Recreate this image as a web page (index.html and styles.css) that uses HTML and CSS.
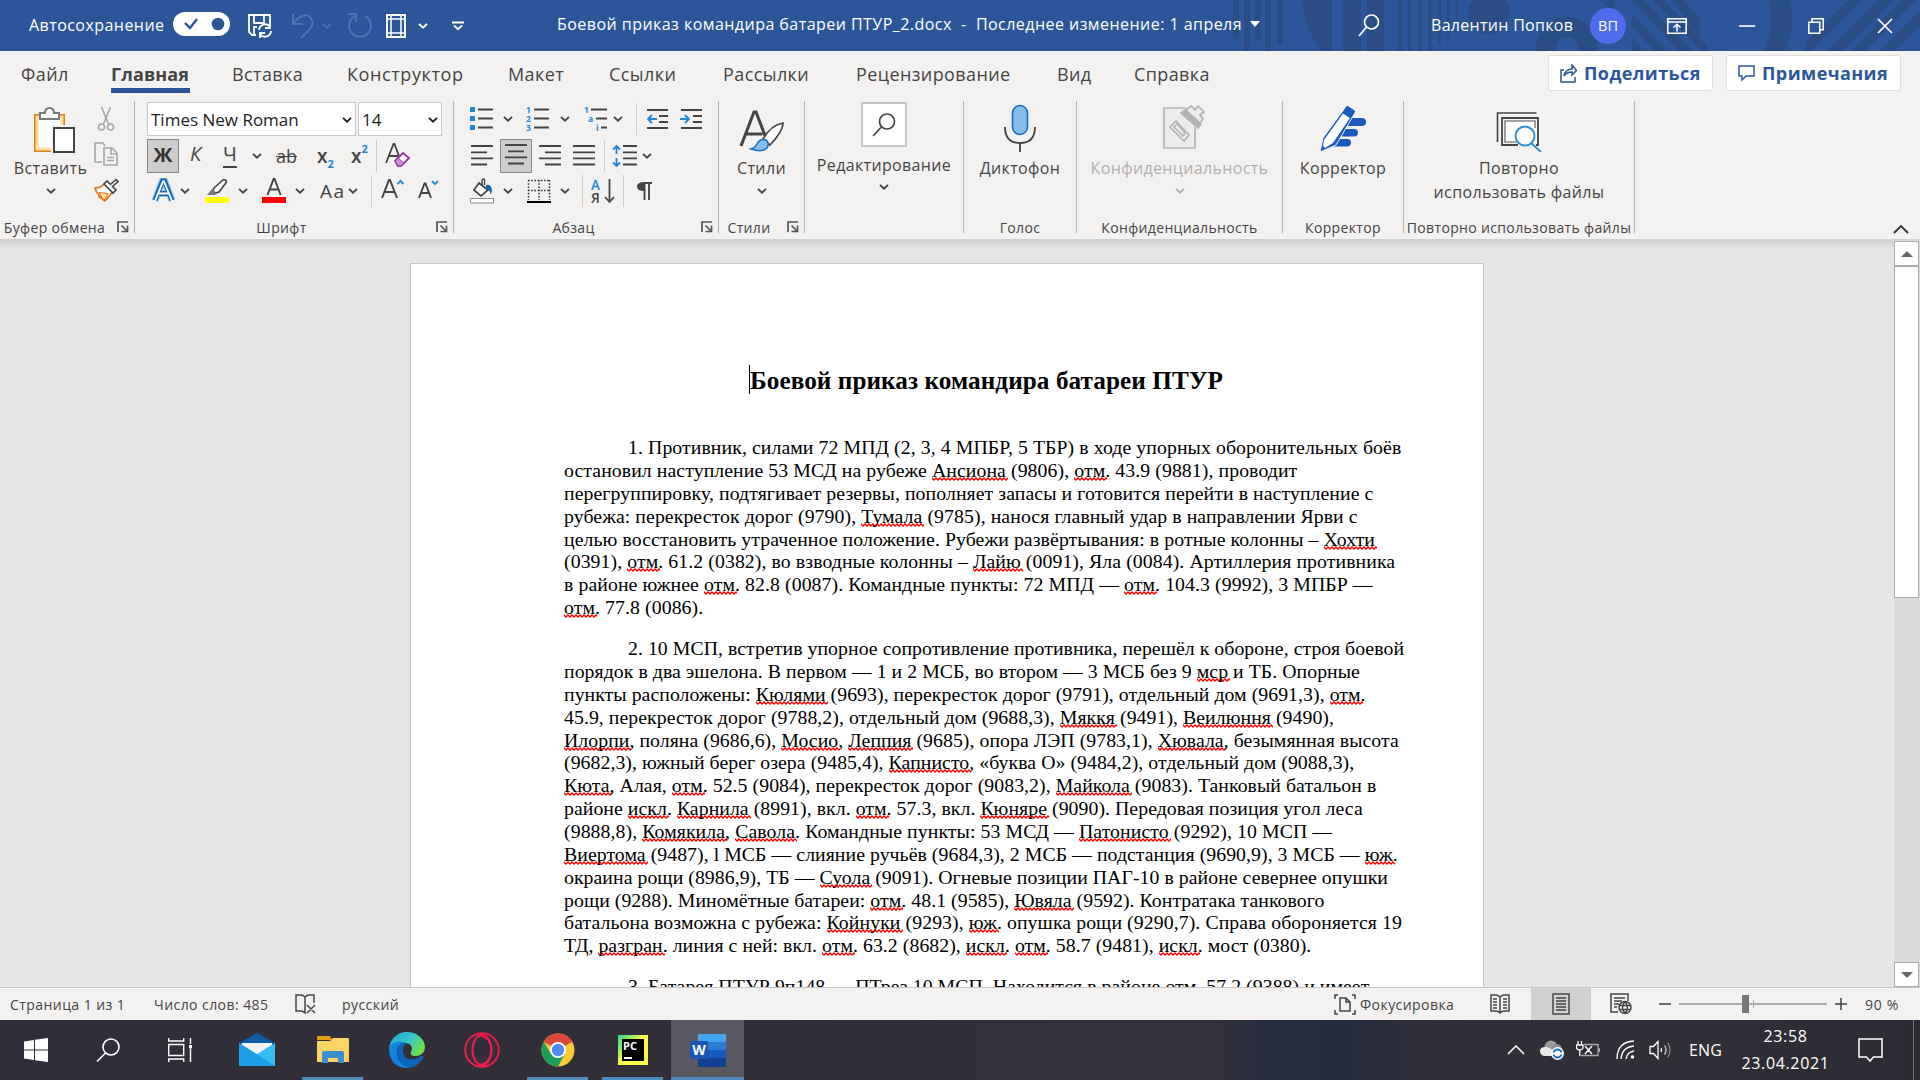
FILE: index.html
```html
<!DOCTYPE html>
<html lang="ru">
<head>
<meta charset="utf-8">
<title>Боевой приказ командира батареи ПТУР_2.docx</title>
<link rel="stylesheet" href="styles.css">
</head>
<body>
<svg class="defs" width="0" height="0">
  <symbol id="chev" viewBox="0 0 10 6"><path d="M1 .9l4 3.8 4-3.8" fill="none" stroke="currentColor" stroke-width="1.9"/></symbol>
  <symbol id="launch" viewBox="0 0 12 12"><path d="M1 11V1h10M4.500 4.500l5 5M10.500 4.500V10.500H4.500" fill="none" stroke="#555" stroke-width="1.700"/></symbol>
</svg>
<div class="app">
<header class="titlebar">
  <svg class="art" width="690" height="51" viewBox="1230 0 690 51" fill="#2a4d84">
    <path d="M1233 0h6v39h-6zM1244 0h6v50h-6zM1255 0h6v39h-6zM1265 0h6v51h-6zM1277 0h6v45h-6zM1302 0h30v51h-10Q1305 30 1302 0zM1343 0h18v51h-18zM1367 0h17v51h-17z"/>
    <path d="M1398 0h4v51h-4zM1408 0h3v51h-3zM1418 0h4v51h-4zM1428 0h4v51h-4zM1438 0h3v45h-3zM1447 0h3v38h-3zM1456 0h2v20h-2z"/>
    <circle cx="1489" cy="13" r="21"/>
    <circle cx="1567" cy="48" r="21" fill="none" stroke="#2a4d84" stroke-width="20"/>
    <path d="M1632 0h12l49 51h-14zM1632 14v13l23 24h12zM1632 38v13h11zM1652 0h12l43 45v6h-5zM1672 0h12l17 20q-4 14 0 20zM1600 0h15v14z"/>
    <path d="M1769 0h21q6 25-5 51h-20q10-27 4-51zM1806 42l42-42h14l-51 51h-5zM1828 51l51-51h14l-51 51zM1851 51l51-51h14l-51 51zM1880 51l40-40v14l-26 26z"/>
  </svg>
  <div class="quick">
    <span class="autosave">Автосохранение</span>
    <span class="toggle"><svg width="57" height="24" viewBox="0 0 57 24"><path d="M12 11l5 5 7-9" fill="none" stroke="#2b579a" stroke-width="2.400"/><circle cx="45" cy="12" r="6.300" fill="#2b579a"/></svg></span>
    <svg class="save" width="26" height="26" viewBox="0 0 26 26" fill="none" stroke="#fff" stroke-width="1.800"><path d="M9 22H5l-3-3V2h21v8M7 2v8h10V2M7 22v-8h3"/><path d="M12 17a6 6 0 0 1 11-3M23 10v5h-5M24 18a6 6 0 0 1-11 3M13 25v-5h5"/></svg>
    <svg width="24" height="26" viewBox="0 0 24 26" fill="none" stroke="#4a74b4" stroke-width="2"><path d="M2 1v10h10M2 11C8 3 15 0 19 4s3 9-1 13l-8 8"/></svg>
    <svg class="dim" width="10" height="6"><use href="#chev"/></svg>
    <svg width="26" height="26" viewBox="0 0 26 26" fill="none" stroke="#4a74b4" stroke-width="2"><path d="M1 1h8v8M8 3a11 11 0 1 0 10 0"/></svg>
    <svg width="20" height="24" viewBox="0 0 20 24" fill="none" stroke="#fff"><path d="M1 1h18v22H1z" stroke-width="2"/><path d="M5 0v24M15 0v24M0 5h20M0 19h20" stroke-width="1.500"/></svg>
    <svg class="wht" width="10" height="6"><use href="#chev"/></svg>
    <svg width="12" height="10" viewBox="0 0 12 10" fill="none" stroke="#fff" stroke-width="1.900"><path d="M0 1.500h12M2 4.500l4 3.800 4-3.800"/></svg>
  </div>
  <div class="doctitle"><span>Боевой приказ командира батареи ПТУР_2.docx&nbsp; -&nbsp; Последнее изменение: 1 апреля</span><svg width="10" height="6"><path d="M0 0h10L5 6z" fill="#fff"/></svg></div>
  <div class="account">
    <svg width="22" height="24" viewBox="0 0 22 24" fill="none" stroke="#fff" stroke-width="1.700"><circle cx="13.500" cy="8" r="7"/><path d="M8.500 13L1 22"/></svg>
    <span class="user">Валентин Попков</span><span class="avatar">ВП</span>
    <svg width="20" height="16" viewBox="0 0 20 16" fill="none" stroke="#fff" stroke-width="1.500"><path d="M.8.8h18.400v14.400H.8zM.8 4h18.400M10 13.500V6.500M6.500 9.500L10 6.200l3.500 3.300"/></svg>
    <svg width="16" height="16"><path d="M0 8h16" stroke="#fff" stroke-width="1.600"/></svg>
    <svg width="16" height="16" viewBox="0 0 16 16" fill="none" stroke="#fff" stroke-width="1.500"><path d="M.8 4.200h11v11H.8zM4 4V.8h11.200v11H12"/></svg>
    <svg width="16" height="16" viewBox="0 0 16 16"><path d="M1 1l14 14M15 1L1 15" stroke="#fff" stroke-width="1.700"/></svg>
  </div>
</header>

<nav class="tabs">
  <div class="tablist"><span>Файл</span><span class="active">Главная</span><span>Вставка</span><span class="wide">Конструктор</span><span>Макет</span><span>Ссылки</span><span>Рассылки</span><span>Рецензирование</span><span>Вид</span><span>Справка</span></div>
  <div class="actions">
    <button class="act share"><svg width="17" height="19" viewBox="0 0 17 19" fill="none" stroke="#2b579a" stroke-width="1.500"><path d="M4 6H1v12h14v-5M4 12c1-5 4-7 8-7V1l4.500 5.500L12 11V8C9 8 6 9 4 12z"/></svg>Поделиться</button>
    <button class="act"><svg width="17" height="19" viewBox="0 0 17 19" fill="none" stroke="#2b579a" stroke-width="1.500"><path d="M1 2h15v10H8l-4 4v-4H1z"/></svg>Примечания</button>
  </div>
</nav>

<section class="ribbon">
  <div class="group g-clip">
    <div class="clip">
      <div class="big paste">
        <svg width="42" height="48" viewBox="0 0 42 48"><path d="M2 10h29v36H2z" fill="#fff" stroke="#e07d17" stroke-width="2"/><path d="M4 12h25v32H4z" fill="none" stroke="#fbdf9b" stroke-width="3"/><path d="M7 14V8h5q0-5 4.500-5t4.500 5h5v6z" fill="#fff" stroke="#7a7a7a" stroke-width="2"/><path d="M18 20h24v28H18z" fill="#f3f2f1"/><path d="M21 23h20v24H21z" fill="#fff" stroke="#444" stroke-width="2"/></svg>
        <span>Вставить</span><svg width="10" height="6"><use href="#chev"/></svg>
      </div>
      <div class="clipcol">
        <svg width="24" height="26" viewBox="0 0 24 26" fill="none" stroke="#a6a6a6" stroke-width="1.600"><path d="M7.500 1L14.500 18M16.500 1L9.500 18"/><circle cx="7.500" cy="21" r="3"/><circle cx="16.500" cy="21" r="3"/></svg>
        <svg width="24" height="24" viewBox="0 0 24 24" fill="none" stroke="#a6a6a6" stroke-width="1.600"><path d="M8 20H1V1h8l2 3M10 6h8l5 5v12H10zM17 6v6h6M13 15.500h7M13 18.500h7"/></svg>
        <svg width="25" height="24" viewBox="0 0 25 24"><path d="M1 10q6 0 10-5l8 8q-4 6-8 10-3-1-4-4l-1.500.5q-.5-3-2-4.500l-1-1z" fill="#fff" stroke="#d9741a" stroke-width="1.700"/><path d="M5 14.500l9 1-3 6.500q-3-1-4-4z" fill="#fbdf9b" stroke="#d9741a"/><path d="M10 6l3-3 3.500 3.500L22 1.500l2 2-5.500 5L22 12l-3 3z" fill="#fff" stroke="#444" stroke-width="1.600"/></svg>
      </div>
    </div>
    <div class="glabel"><span>Буфер обмена</span><svg width="12" height="12"><use href="#launch"/></svg></div>
  </div>

  <div class="group g-font">
    <div class="rows">
      <div class="row combos"><div class="combo font">Times New Roman<svg width="10" height="6"><use href="#chev"/></svg></div><div class="combo size">14<svg width="10" height="6"><use href="#chev"/></svg></div></div>
      <div class="row f2">
        <b class="pressed">Ж</b><i class="ch">К</i><u class="ch">Ч</u><svg width="10" height="6"><use href="#chev"/></svg><s class="ch ab">ab</s>
        <span class="ch xs">x<sub>2</sub></span><span class="ch xs">x<sup>2</sup></span><span class="sep"></span>
        <svg width="26" height="26" viewBox="0 0 26 26" fill="none"><path d="M1 20L8.500 1h1L14 13M4 13h9" stroke="#444" stroke-width="1.800"/><path d="M10 18l8-8 6 5-8 8h-3z" fill="#fff" stroke="#9b30a5" stroke-width="1.800"/><path d="M10 18l3-3 6 5-3 3h-3z" fill="#c98fd0" stroke="#9b30a5"/></svg>
      </div>
      <div class="row f3">
        <svg width="25" height="26" viewBox="0 0 25 26" fill="none"><path d="M4 22.500L11.500 3h2L21 22.500M7.500 15.500h10" stroke="#83c0f0" stroke-width="7"/><path d="M4 22.500L11.500 3h2L21 22.500M7.500 15.500h10" stroke="#1664b4" stroke-width="4.800"/><path d="M4 23L12 3.500h1L21 23M7.500 15.500h10" stroke="#fff" stroke-width="1.900"/></svg>
        <svg width="10" height="6"><use href="#chev"/></svg>
        <svg width="24" height="26" viewBox="0 0 24 26"><path d="M9 10L18 2q3-1 3.500 2L14 14l-4 1-2-2z" fill="#fff" stroke="#444" stroke-width="1.600"/><path d="M2 17l5-6 5 5-2 1z" fill="#777"/><path d="M0 19h24v6H0z" fill="#ff0"/></svg>
        <svg width="10" height="6"><use href="#chev"/></svg>
        <svg width="24" height="26" viewBox="0 0 24 26"><path d="M5.500 17L11.600 1h1l6 16M7.500 11.500h9" fill="none" stroke="#444" stroke-width="1.900"/><path d="M0 19h24v6H0z" fill="red"/></svg>
        <svg width="10" height="6"><use href="#chev"/></svg>
        <span class="ch aa">Aa</span><svg width="10" height="6"><use href="#chev"/></svg><span class="sep"></span>
        <svg width="24" height="26" viewBox="0 0 24 26" fill="none"><path d="M1 20L8 2h1l7 18M3.500 14h10" stroke="#444" stroke-width="2"/><path d="M16.500 6l3-3 3 3" stroke="#2a91d6" stroke-width="2"/></svg>
        <svg width="22" height="26" viewBox="0 0 22 26" fill="none"><path d="M1 20L6.500 5.500h1L13 20M3 15h8" stroke="#444" stroke-width="1.900"/><path d="M14 3l3 3 3-3" stroke="#2a91d6" stroke-width="2"/></svg>
      </div>
    </div>
    <div class="glabel"><span>Шрифт</span><svg width="12" height="12"><use href="#launch"/></svg></div>
  </div>

  <div class="group g-para">
    <div class="rows">
      <div class="row p1">
        <svg width="24" height="24" viewBox="0 0 24 24"><path d="M0 0h5v5H0zM0 9h5v5H0zM0 18h5v5H0z" fill="#1e88d2"/><path d="M8 2.500h15M8 11.500h15M8 20.500h15" stroke="#444" stroke-width="1.800"/></svg>
        <svg width="10" height="6"><use href="#chev"/></svg>
        <svg class="list" width="24" height="26" viewBox="0 0 24 26"><path d="M8 3.500h15M8 12.500h15M8 21.500h15" stroke="#444" stroke-width="1.800"/><g class="num"><text x="0" y="7">1</text><text x="0" y="16">2</text><text x="0" y="25">3</text></g></svg>
        <svg width="10" height="6"><use href="#chev"/></svg>
        <svg class="list" width="24" height="26" viewBox="0 0 24 26"><path d="M7 3.500h16M12 12.500h11M17 21.500h6" stroke="#444" stroke-width="1.800"/><g class="num"><text x="0" y="7">1</text><text x="4" y="16">a</text><text x="12" y="25">i</text></g></svg>
        <svg width="10" height="6"><use href="#chev"/></svg><span class="sep"></span>
        <svg width="23" height="22" viewBox="0 0 23 22" fill="none" stroke="#444" stroke-width="1.800"><path d="M1 2h21M13 8h9M13 14h9M1 20h21"/><path d="M11 11H2M6 7l-4 4 4 4" stroke="#1e88d2"/></svg>
        <svg width="23" height="22" viewBox="0 0 23 22" fill="none" stroke="#444" stroke-width="1.800"><path d="M1 2h21M13 8h9M13 14h9M1 20h21"/><path d="M0 11h9M5 7l4 4-4 4" stroke="#1e88d2"/></svg>
      </div>
      <div class="row p2">
        <svg width="22" height="22" viewBox="0 0 22 22" stroke="#444" stroke-width="1.800"><path d="M0 1h22M0 7.300h16M0 13.300h22M0 19.500h16"/></svg>
        <span class="pressed"><svg width="22" height="22" viewBox="0 0 22 22" stroke="#444" stroke-width="1.800"><path d="M0 1h22M3 7.300h16M0 13.300h22M3 19.500h16"/></svg></span>
        <svg width="22" height="22" viewBox="0 0 22 22" stroke="#444" stroke-width="1.800"><path d="M0 1h22M6 7.300h16M0 13.300h22M6 19.500h16"/></svg>
        <svg width="22" height="22" viewBox="0 0 22 22" stroke="#444" stroke-width="1.800"><path d="M0 1h22M0 7.300h22M0 13.300h22M0 19.500h22"/></svg>
        <span class="sep"></span>
        <svg width="25" height="22" viewBox="0 0 25 22" fill="none" stroke="#444" stroke-width="1.800"><path d="M11 1h14M11 7.300h14M11 13.300h14M11 19.500h14"/><path d="M4.500 1v8M1 4.500L4.500 1 8 4.500M4.500 21v-8M1 17.500L4.500 21 8 17.500" stroke="#1e88d2"/></svg>
        <svg width="10" height="6"><use href="#chev"/></svg>
      </div>
      <div class="row p3">
        <svg width="24" height="26" viewBox="0 0 24 26"><path d="M9 5l9 7-7 6-7-6z" fill="#fff" stroke="#444" stroke-width="1.700"/><path d="M12 8V3q0-2 1.500-2t1 2v4" fill="none" stroke="#444" stroke-width="1.400"/><path d="M16 7q5-1 6 5l-1 5q-1-5-5-7z" fill="#1664b4"/><path d="M.5 20.500h23v4.500H.5z" fill="#fff" stroke="#8a8a8a"/></svg>
        <svg width="10" height="6"><use href="#chev"/></svg>
        <svg width="24" height="26" viewBox="0 0 24 26" fill="none" stroke="#333"><path d="M1 2.500h22M1 12.500h22M1.500 2v20M12 2v20M22.500 2v20" stroke-width="1.500" stroke-dasharray="1.600 1.600"/><path d="M0 24h24" stroke="#000" stroke-width="2"/></svg>
        <svg width="10" height="6"><use href="#chev"/></svg><span class="sep"></span>
        <svg class="list" width="25" height="26" viewBox="0 0 25 26"><path d="M18.500 1v23M14 19l4.500 5L23 19" fill="none" stroke="#444" stroke-width="1.800"/><g class="sort"><text x="0" y="11.500" fill="#1e88d2">А</text><text x="0" y="25" fill="#444">Я</text></g></svg>
        <span class="sep"></span>
        <svg width="15" height="20" viewBox="0 0 15 20"><path d="M7 1v9Q0 10 0 5.500T7 1z" fill="#444"/><path d="M6 2h9M7.500 2v17M12 2v17" stroke="#444" stroke-width="1.900"/></svg>
      </div>
    </div>
    <div class="glabel"><span>Абзац</span><svg width="12" height="12"><use href="#launch"/></svg></div>
  </div>

  <div class="group g-styles">
    <div class="big">
      <svg width="46" height="48" viewBox="0 0 46 48"><path d="M2 42L15 8h2l10 26M6.500 30h17" fill="none" stroke="#444" stroke-width="3"/><path d="M24 35Q32 21 44 19q0 8-13 22z" fill="#fff" stroke="#444" stroke-width="1.700"/><path d="M12 45q4-1 6-5 3-6 9-4 4 3 1 8-5 5-16 1z" fill="#83c0ee" stroke="#1a6fbf" stroke-width="1.600"/></svg>
      <span>Стили</span><svg width="10" height="6"><use href="#chev"/></svg>
    </div>
    <div class="glabel"><span>Стили</span><svg width="12" height="12"><use href="#launch"/></svg></div>
  </div>

  <div class="group g-edit">
    <div class="big edit">
      <span class="editbox"><svg width="24" height="24" viewBox="0 0 24 24" fill="none" stroke="#444" stroke-width="1.700"><circle cx="15" cy="8.500" r="7.500"/><path d="M9.500 14L1 23"/></svg></span>
      <span>Редактирование</span><svg width="10" height="6"><use href="#chev"/></svg>
    </div>
  </div>

  <div class="group g-voice">
    <div class="big">
      <svg width="34" height="48" viewBox="0 0 34 48" fill="none"><rect x="9.500" y="1.500" width="15" height="29" rx="7.500" fill="#83beec" stroke="#1a6fbf" stroke-width="1.600"/><path d="M2 23q0 16 15 16t15-16M17 39v9" stroke="#444" stroke-width="1.800"/></svg>
      <span>Диктофон</span>
    </div>
    <div class="glabel"><span>Голос</span></div>
  </div>

  <div class="group g-conf">
    <div class="big off">
      <svg class="shift" width="42" height="48" viewBox="0 0 42 48" fill="#ececec" stroke="#b4b4b4" stroke-width="1.700"><path d="M1 4h31v40H1z"/><path d="M7 23l6-6 13 14-5 6z"/><path d="M11 23l3-3 8 9-2 3z" fill="none"/><path d="M16 8l16-8 10 12-7 13z" stroke="#f3f2f1"/><path d="M18 9l5-4 15 15-3 4z" fill="#b4b4b4"/><path d="M23 6l5-4 4 4 3-4 6 6-4 3 3 4-3 4z"/></svg>
      <span>Конфиденциальность</span><svg width="10" height="6"><use href="#chev"/></svg>
    </div>
    <div class="glabel"><span>Конфиденциальность</span></div>
  </div>

  <div class="group g-corr">
    <div class="big">
      <svg width="46" height="48" viewBox="0 0 46 48" fill="#185abd"><rect x="24" y="14" width="22" height="8" rx="4"/><rect x="16" y="25" width="22" height="7.500" rx="3.700"/><rect x="8" y="35" width="23" height="7.500" rx="3.700"/><path d="M0 48l3-14L27 1l9 6-20 34z" stroke="#f3f2f1"/><path d="M4 36L23 9.500l7 4.500L13 39l-8 5-2-2z" fill="#fff"/></svg>
      <span>Корректор</span>
    </div>
    <div class="glabel"><span>Корректор</span></div>
  </div>

  <div class="group g-reuse">
    <div class="big">
      <svg width="46" height="48" viewBox="0 0 46 48" fill="none" stroke="#444" stroke-width="1.600"><path d="M1.500 38V9h39"/><path d="M6 14h36v27H6z" stroke-width="1.800"/><path d="M9 17h30v21H9z" fill="#fff" stroke="#888"/><path d="M22 24h18v18H22z" fill="#f8f8f8" stroke="none"/><circle cx="29" cy="32" r="9.500" fill="#fff" stroke="#2a91d6" stroke-width="1.900"/><path d="M35 39l10 9" stroke="#2a91d6" stroke-width="2"/></svg>
      <span>Повторно<br>использовать файлы</span>
    </div>
    <div class="glabel"><span>Повторно использовать файлы</span></div>
  </div>
  <svg class="collapse" width="16" height="10" viewBox="0 0 16 10"><path d="M1 9l7-7 7 7" fill="none" stroke="#333" stroke-width="1.900"/></svg>
</section>

<main class="work">
  <div class="canvas">
    <article class="page">
      <h1><span class="caret"></span>Боевой приказ командира батареи ПТУР</h1>
      <p class="first">1. Противник, силами 72 МПД (2, 3, 4 МПБР, 5 ТБР) в ходе упорных оборонительных боёв<br>
остановил наступление 53 МСД на рубеже <em>Ансиона</em> (9806), <em>отм</em>. 43.9 (9881), проводит<br>
перегруппировку, подтягивает резервы, пополняет запасы и готовится перейти в наступление с<br>
рубежа: перекресток дорог (9790), <em>Тумала</em> (9785), нанося главный удар в направлении Ярви с<br>
целью восстановить утраченное положение. Рубежи развёртывания: в ротные колонны – <em>Хохти</em><br>
(0391), <em>отм</em>. 61.2 (0382), во взводные колонны – <em>Лайю</em> (0091), Яла (0084). Артиллерия противника<br>
в районе южнее <em>отм</em>. 82.8 (0087). Командные пункты: 72 МПД — <em>отм</em>. 104.3 (9992), 3 МПБР —<br>
<em>отм</em>. 77.8 (0086).</p>
      <p>2. 10 МСП, встретив упорное сопротивление противника, перешёл к обороне, строя боевой<br>
порядок в два эшелона. В первом — 1 и 2 МСБ, во втором — 3 МСБ без 9 <em>мср</em> и ТБ. Опорные<br>
пункты расположены: <em>Кюлями</em> (9693), перекресток дорог (9791), отдельный дом (9691,3), <em>отм</em>.<br>
45.9, перекресток дорог (9788,2), отдельный дом (9688,3), <em>Мяккя</em> (9491), <em>Веилюння</em> (9490),<br>
<em>Илорпи</em>, поляна (9686,6), <em>Мосио</em>, <em>Леппия</em> (9685), опора ЛЭП (9783,1), <em>Хювала</em>, безымянная высота<br>
(9682,3), южный берег озера (9485,4), <em>Капнисто</em>, «буква О» (9484,2), отдельный дом (9088,3),<br>
<em>Кюта</em>, Алая, <em>отм</em>. 52.5 (9084), перекресток дорог (9083,2), <em>Майкола</em> (9083). Танковый батальон в<br>
районе <em>искл</em>. <em>Карнила</em> (8991), вкл. <em>отм</em>. 57.3, вкл. <em>Кюняре</em> (9090). Передовая позиция угол леса<br>
<span class="loose">(9888,8), <em>Комякила</em>, <em>Савола</em>. Командные пункты: 53 МСД — <em>Патонисто</em> (9292), 10 МСП —</span><br>
<em>Виертома</em> (9487), l МСБ — слияние ручьёв (9684,3), 2 МСБ — подстанция (9690,9), 3 МСБ — <em>юж</em>.<br>
окраина рощи (8986,9), ТБ — <em>Суола</em> (9091). Огневые позиции ПАГ-10 в районе севернее опушки<br>
рощи (9288). Миномётные батареи: <em>отм</em>. 48.1 (9585), <em>Ювяла</em> (9592). Контратака танкового<br>
<span class="loose">батальона возможна с рубежа: <em>Койнуки</em> (9293), <em>юж</em>. опушка рощи (9290,7). Справа обороняется 19</span><br>
ТД, <em>разгран</em>. линия с ней: вкл. <em>отм</em>. 63.2 (8682), <em>искл</em>. <em>отм</em>. 58.7 (9481), <em>искл</em>. мост (0380).</p>
      <p>3. Батарея ПТУР 9п148 — ПТрез 10 МСП. Находится в районе отм. 57.2 (9388) и имеет</p>
    </article>
  </div>
  <div class="scroll">
    <span class="sbtn"><svg width="12" height="6"><path d="M0 6h12L6 0z" fill="#666"/></svg></span>
    <span class="thumb"></span>
    <span class="sbtn end"><svg width="12" height="6"><path d="M0 0h12L6 6z" fill="#666"/></svg></span>
  </div>
</main>

<footer class="status">
  <div class="stat-left">
    <span>Страница 1 из 1</span><span>Число слов: 485</span>
    <svg width="22" height="20" viewBox="0 0 22 20" fill="none" stroke="#444" stroke-width="1.500"><path d="M10 3Q8 1 6 1H1v16h5q2 0 4 2V3q2-2 4-2h5v8M12 11l8 8M20 11l-8 8"/></svg>
    <span>русский</span>
  </div>
  <div class="stat-right">
    <svg width="22" height="21" viewBox="0 0 22 21" fill="none" stroke="#444" stroke-width="1.500"><path d="M4 1H1v4M18 1h3v4M4 20H1v-4M18 20h3v-4M6 4h6l4 4v9H6zM12 4v4h4"/></svg>
    <span class="focus">Фокусировка</span>
    <svg width="20" height="20" viewBox="0 0 20 20" fill="none" stroke="#444" stroke-width="1.500"><path d="M10 3Q8 1 6 1H1v16h5q2 0 4 2 2-2 4-2h5V1h-5q-2 0-4 2v16M3 5h4M3 8h4M3 11h4M3 14h4M13 5h4M13 8h4M13 11h4M13 14h4"/></svg>
    <span class="viewon"><svg width="18" height="22" viewBox="0 0 18 22" fill="none" stroke="#444" stroke-width="1.500"><path d="M1 1h16v20H1zM4 5h10M4 8h10M4 11h10M4 14h10M4 17h10"/></svg></span>
    <svg width="22" height="22" viewBox="0 0 22 22" fill="none" stroke="#444" stroke-width="1.500"><path d="M8 19H1V1h17v7M4 5h11M4 8h8M4 11h5M4 14h3"/><circle cx="15" cy="14.500" r="6" fill="#f3f2f1"/><path d="M9 12.500h12M9 16.500h12M15 8.500q-5 6 0 12M15 8.500q5 6 0 12"/></svg>
    <svg width="12" height="12"><path d="M0 6h12" stroke="#444" stroke-width="1.500"/></svg>
    <span class="slider"><span class="knob"></span><span class="tick"></span></span>
    <svg width="12" height="12"><path d="M0 6h12M6 0v12" stroke="#444" stroke-width="1.500"/></svg>
    <span class="zoom">90 %</span>
  </div>
</footer>

<div class="taskbar">
  <div class="apps">
    <span class="app-i"><svg width="24" height="24" viewBox="0 0 24 24" fill="#fff"><path d="M0 3.500L10 2v9.400H0zM11 1.800L24 0v11.400H11zM0 12.400h10V22L0 20.500zM11 12.400h13V24l-13-1.800z"/></svg></span>
    <span class="app-i"><svg width="24" height="24" viewBox="0 0 24 24" fill="none" stroke="#fff" stroke-width="1.600"><circle cx="15" cy="9" r="8"/><path d="M9.500 15L1 23.500"/></svg></span>
    <span class="app-i"><svg width="24" height="24" viewBox="0 0 24 24" fill="none" stroke="#fff" stroke-width="1.400"><path d="M.7 0v3h15V0M.7 6.500h15v11H.7zM.7 24v-3h15v3M22.500 0v6M22.500 11v13"/><path d="M21 7h3v3.500h-3z" fill="#fff" stroke="none"/></svg></span>
    <span class="app-i mail"><svg width="36" height="34" viewBox="0 0 36 34"><path d="M0 10L18 0l18 10v6H0z" fill="#0a5ea8"/><path d="M3 10h30v14H3z" fill="#f2f4f6"/><path d="M0 10l18 11L36 10v23H0z" fill="#33bdf2"/><path d="M0 10l36 23H0z" fill="#1b9fe6"/><path d="M3 10h30L18 21z" fill="#f2f4f6"/></svg></span>
    <span class="app-i run w2"><svg width="32" height="28" viewBox="0 0 32 28"><path d="M0 1q0-1 1-1h12l2 4H0z" fill="#e39e0b"/><path d="M0 5h13l3-3h15q1 0 1 1v23H0z" fill="#fdd465"/><path d="M5 27V17q0-2 2-2h18q2 0 2 2v10h-6v-5H11v5z" fill="#3a8fd0"/></svg></span>
    <span class="app-i edge"><svg width="36" height="36" viewBox="0 0 36 36"><defs><linearGradient id="eg" x1="0" y1="0" x2="1" y2=".5"><stop offset="0" stop-color="#249fe0"/><stop offset=".6" stop-color="#37c6c6"/><stop offset="1" stop-color="#6fe04e"/></linearGradient></defs><path d="M0 17c2-6 10-8 17-5-5 2-4 14 3 15 5 1 9-1 12-3 2-1 3 0 2 2-3 6-9 10-16 10C8 36 0 28 0 17z" fill="#0c63b8"/><path d="M0 17C1 6 9 0 18 0c11 0 18 8 18 15 0 6-5 9-9 9-5 0-6-2-5-4 3-5-1-9-6-9C8 10 1 12 0 17z" fill="url(#eg)"/><path d="M0 17c1-7 10-9 16-6-6 0-10 6-8 13s7 11 13 11C8 38 0 29 0 17z" fill="#1681d8"/></svg></span>
    <span class="app-i opera"><svg width="36" height="36" viewBox="0 0 36 36" fill="none" stroke="#ec1c4b"><circle cx="18" cy="18" r="16.800" stroke-width="2"/><ellipse cx="18" cy="18" rx="9.500" ry="15" stroke-width="2"/><path d="M14 3q13 2 13 15T14 33" stroke-width="1.300"/></svg></span>
    <span class="app-i run w2 spaced"><svg width="34" height="34" viewBox="0 0 34 34"><circle cx="17" cy="17" r="16.500" fill="#fcc934"/><path d="M17 17L2.700 8.700A16.500 16.500 0 0 1 31.300 8.700z" fill="#da4a3b"/><path d="M2.700 8.700A16.500 16.500 0 0 0 17 33.500L24 21 10 21z" fill="#1c9f58"/><path d="M17 9h14.400q-1-3-4-5L10 7z" fill="#da4a3b"/><circle cx="17" cy="17" r="8" fill="#fff"/><circle cx="17" cy="17" r="6.200" fill="#4c8bf5"/></svg></span>
    <span class="app-i run w2 pc"><svg width="30" height="30" viewBox="0 0 30 30"><defs><linearGradient id="pg" x1="0" y1="0" x2=".5" y2=".45"><stop offset="0" stop-color="#21d789"/><stop offset="1" stop-color="#fcf84a"/></linearGradient></defs><path d="M0 0h30v30H0z" fill="url(#pg)"/><path d="M4 4h22v22H4z" fill="#000"/><text x="5" y="15" class="pct">PC</text><path d="M6 22h8v2H6z" fill="#fff"/></svg></span>
    <span class="app-i run on"><svg width="36" height="33" viewBox="0 0 36 33"><path d="M8 1q0-1 1-1h26q1 0 1 1v8H8z" fill="#41a5ee"/><path d="M8 8h28v8H8z" fill="#2b7cd3"/><path d="M8 16h28v8H8z" fill="#185abd"/><path d="M8 24h28v8q0 1-1 1H9q-1 0-1-1z" fill="#103f91"/><rect y="7" width="18" height="18" rx="1.500" fill="#1a56b4"/><text x="2.300" y="21" class="wt">W</text></svg></span>
  </div>
  <div class="tray">
    <svg width="18" height="10" viewBox="0 0 18 10"><path d="M1 9l8-8 8 8" fill="none" stroke="#fff" stroke-width="1.500"/></svg>
    <svg width="25" height="20" viewBox="0 0 25 20"><circle cx="11" cy="7" r="6.500" fill="#9a9a9a"/><circle cx="17" cy="9" r="5" fill="#8a8a8a"/><path d="M4 16q-4-1-4-5t5-4q5 0 8 4v5z" fill="#e8e8e8"/><circle cx="17.500" cy="13.500" r="6.500" fill="#fff"/><path d="M13.500 12.500q1-3 4-3t4 3M21.500 14.500q-1 3-4 3t-4-3" fill="none" stroke="#1a74c8" stroke-width="1.800"/></svg>
    <svg width="24" height="18" viewBox="0 0 24 18" fill="none" stroke="#fff" stroke-width="1.300"><path d="M2 0v4M5.500 0v4M.5 4h6.500v3q-1 2-3.200 2T.5 7zM3.800 9v6M9 5l7 8M16 5l-7 8"/><path d="M8 3.500h14v11H5M23.500 7v4" stroke="#aaa"/></svg>
    <svg width="20" height="20" viewBox="0 0 20 20" fill="none" stroke="#fff" stroke-width="1.300"><path d="M1 19Q1 2 18 1M5 19Q6 7 18 6M10 19Q11 12 18 11"/><circle cx="16.500" cy="17" r="1.800" fill="#fff" stroke="none"/></svg>
    <svg width="23" height="20" viewBox="0 0 23 20" fill="none" stroke="#fff" stroke-width="1.300"><path d="M1 6.500h3.500L9 1.500v17l-4.500-5H1zM12 8q1 2 0 4"/><path d="M15.500 5.500q3 4.500 0 9" stroke="#ccc"/><path d="M18.500 2.500q5 7.500 0 15" stroke="#888"/></svg>
    <span class="lang">ENG</span>
    <div class="clock"><span>23:58</span><span>23.04.2021</span></div>
    <svg width="25" height="26" viewBox="0 0 25 26"><path d="M1 2h23v18h-8.500l-3.500 4-3.500-4H1z" fill="none" stroke="#fff" stroke-width="1.500"/></svg>
    <span class="peek"></span>
  </div>
</div>
</div>
</body>
</html>
```
FILE: styles.css
```css
*{box-sizing:border-box}
html,body{margin:0;padding:0}
body{width:1920px;height:1080px;overflow:hidden;font-family:"Open Sans","Noto Sans",sans-serif;font-size:16px;letter-spacing:.35px;color:#444}
svg{display:block;flex:none}
.defs{position:absolute}
.app{width:1920px;height:1080px;display:flex;flex-direction:column}

/* title bar */
.titlebar{position:relative;height:51px;background:#2b579a;color:#fff;display:flex;align-items:center;flex:none;white-space:nowrap}
.art{position:absolute;left:1230px;top:0}
.quick{display:grid;grid-template-columns:144px 75px 43px 31px 25px 39px 32px 34px 12px;padding-left:29px;align-items:center;height:51px;width:557px}
.autosave{letter-spacing:.45px;margin-top:-1px}
.toggle{width:57px;height:24px;border-radius:12px;background:#fff;margin-top:-3px}
.save{margin-left:-1px}
.dim{color:#4a74b4}
.wht{color:#fff}
.doctitle{display:flex;align-items:center;width:801px;gap:8px;letter-spacing:.46px;padding-bottom:3px;position:relative}
.account{position:relative;display:grid;grid-template-columns:73px 159px 77px 72px 69px 69px 16px;align-items:center}
.user{letter-spacing:.3px;margin-top:-1px}
.avatar{width:36px;height:36px;border-radius:50%;background:#4f6bed;font-size:14.500px;display:grid;place-items:center;letter-spacing:0}

/* ribbon tabs */
.tabs{height:50px;background:#f3f2f1;display:flex;justify-content:space-between;flex:none;font-size:18px;white-space:nowrap}
.tablist{display:grid;grid-template-columns:90px 121px 115px 161px 101px 114px 133px 201px 77px 100px;padding-left:21px;line-height:46px;letter-spacing:.4px}
.tablist .wide{letter-spacing:.6px}
.tablist .active{font-weight:700;letter-spacing:.1px;width:79px;height:42px;border-bottom:5px solid #2b579a}
.actions{display:flex;gap:13px;padding:4px 19px 0 0}
.act{height:36px;width:175px;background:#fff;border:1px solid #e1dfdd;border-radius:3px;font:700 18px "Open Sans",sans-serif;letter-spacing:.42px;color:#2b579a;display:flex;align-items:center;gap:7px;padding:0 0 0 11px}
.share{width:165px}

/* ribbon */
.ribbon{height:139px;background:#f3f2f1;border-bottom:1px solid #d2d0ce;display:flex;align-items:flex-start;flex:none;white-space:nowrap}
.group{height:132px;border-right:1px solid #b5b3b1;display:flex;flex-direction:column;justify-content:space-between;flex:none}
.g-clip{width:135px}.g-font{width:319px}.g-para{width:265px}.g-styles{width:86px}.g-edit{width:159px}.g-voice{width:113px}.g-conf{width:206px}.g-corr{width:121px}.g-reuse{width:231px}
.glabel{height:12px;display:flex;align-items:center;font-size:14px}
.glabel span{flex:1;text-align:center}
.glabel svg{margin:0 5px 0 8px}
.rows{display:grid;grid-template-rows:36px 38px 32px}
.row{display:grid;align-items:center}
.combos{grid-template-columns:209px 84px;gap:2px;padding-left:12px}
.combo{height:34px;background:#fff;border:1px solid #c8c6c4;font-size:17px;letter-spacing:0;color:#222;display:flex;align-items:center;justify-content:space-between;padding:1px 3px 0 3px}
.f2{padding-left:12px;grid-template-columns:43px 33px 29px 24px 41px 34px 25px 9px 26px}
.f3{padding-left:16px;grid-template-columns:29px 25px 33px 24px 33px 25px 28px 23px 10px 37px 22px}
.p1{padding-left:16px;grid-template-columns:33px 23px 34px 24px 29px 23px 10px 34px 23px}
.p2{padding-left:17px;grid-template-columns:29px 39px 34px 31px 8px 30px 10px}
.p3{padding-left:16px;grid-template-columns:33px 24px 33px 22px 9px 32px 14px 15px}
.sep{width:1px;height:32px;background:#cfcdcb}
.pressed{width:32px;height:34px;background:#cfcdcb;border:1px solid #8a8886;display:grid;place-items:center;color:#333;font-size:20px;line-height:28px;letter-spacing:0;padding-bottom:2px}
.ch{font-size:20px;line-height:28px;letter-spacing:0;color:#444}
u.ch{text-underline-offset:5px;text-decoration-thickness:1.500px;line-height:24px;margin-top:-4px}
i.ch{margin-top:-4px}
.ab{font-size:18px;width:24px}
.xs{font-weight:600;font-size:19px;display:flex;align-items:center}
.xs sub,.xs sup{font-size:11px;font-weight:700;color:#1e88d2;line-height:11px}
.xs sub{margin-top:14px}
.xs sup{margin-top:-16px}
.aa{letter-spacing:1.500px;font-size:19px}
.list{overflow:visible}
.num{font:700 8.500px "Open Sans",sans-serif;fill:#1e88d2;letter-spacing:0}
.sort{font:600 13.500px "Open Sans",sans-serif;letter-spacing:0}
.clip{display:flex}
.paste{width:86px;padding-left:15px}
.paste>svg:first-child{position:relative;left:3px;top:1px}
.clipcol{padding:5px 0 0 8px;display:grid;grid-template-rows:36px 36px 24px}
.big{display:flex;flex-direction:column;align-items:center;padding-top:3px}
.big>span{line-height:24px;margin-top:4px;text-align:center}
.big>span+svg{margin-top:8px}
.big.off{color:#b1afad}
.big.edit{padding-top:1px}
.edit .editbox{width:46px;height:45px;background:#fff;border:2px solid #c8c6c4;display:grid;place-items:center;margin:0}
.edit .editbox+span{margin-top:6px}
.edit>span+svg{margin-top:7px}
.shift{position:relative;left:4px}
.collapse{margin:123px 0 0 258px}

/* document area */
.work{flex:1;min-height:0;display:flex;background:#e6e6e6;background-image:linear-gradient(#cfcfcf,#e6e6e6 9px)}
.canvas{flex:1;overflow:hidden;padding:23px 0 0 410px}
.page{width:1074px;height:900px;background:#fff;border:1px solid #c6c6c6;border-bottom:0;padding:102px 0 0 153px;font-family:"Liberation Serif",serif;color:#000;white-space:nowrap}
.page h1{margin:0 0 41.200px 186px;font-size:25.200px;line-height:29px;letter-spacing:.08px;position:relative}
.caret{position:absolute;left:-1px;top:-1px;width:1px;height:29px;background:#000}
.page p{margin:0 0 18px;font-size:19.800px;line-height:22.860px;letter-spacing:.05px;text-indent:64px}
.page .first{letter-spacing:.078px}
.page .loose{letter-spacing:.08px}
.page em{font-style:normal;padding-right:2px;margin-right:-2px;background:url("data:image/svg+xml,%3Csvg xmlns='http://www.w3.org/2000/svg' width='4' height='4'%3E%3Cpath d='M-2 3L0 1L2 3L4 1L6 3' fill='none' stroke='red' stroke-width='1.3'/%3E%3C/svg%3E") repeat-x left bottom}
.scroll{width:26px;background:#dadada;display:flex;flex-direction:column;padding-top:1px}
.sbtn,.thumb{width:25px;background:#fff;border:1px solid #ababab;flex:none}
.sbtn{height:25px;display:grid;place-items:center}
.thumb{height:332px}
.end{margin-top:auto}

/* status bar */
.status{height:33px;background:#f3f2f1;border-top:1px solid #c8c6c4;display:flex;justify-content:space-between;align-items:center;font-size:14px;flex:none;white-space:nowrap;letter-spacing:.44px}
.stat-left{display:grid;grid-template-columns:144px 141px 47px 60px;padding-left:10px;align-items:center}
.stat-right{display:grid;grid-template-columns:26px 130px 41px 79px 49px 20px 156px 30px 55px;align-items:center;height:32px}
.viewon{width:60px;height:32px;background:#d2d0ce;display:grid;place-items:center}
.slider{width:148px;height:18px;background:linear-gradient(#adabaa,#adabaa) 0 8px/100% 2px no-repeat;display:flex;align-items:center;padding-left:63px;gap:4px}
.knob{width:7px;height:18px;background:#777}
.tick{width:1px;height:8px;background:#adabaa}
.zoom{letter-spacing:.7px}

/* taskbar */
.taskbar{height:60px;flex:none;background:linear-gradient(90deg,#302e39 0,#322f38 45%,#33303a 63%,#252d42 66.500%,#252c3f 70%,#322f38 75%,#302e37 88%,#2c2b33);color:#fff;display:flex;justify-content:space-between;white-space:nowrap}
.apps{display:flex}
.app-i{height:60px;width:72px;display:grid;place-items:center;padding-bottom:1px}
.mail{width:82px;margin-right:4px}
.w2{width:61px}
.edge{width:88px}
.opera{width:62px;margin-right:14px}
.spaced{margin-right:14px}
.pc{margin-right:8px}
.run{border-bottom:3px solid #4f8cbd;padding-bottom:0;padding-top:3px}
.on{width:73px;background:#5a5962}
.tray{display:grid;grid-template-columns:33px 36px 40px 33px 40px 50px 119px 55px 7px;align-items:center;height:60px}
.lang{letter-spacing:.2px}
.clock{display:grid;grid-template-rows:27px 27px;line-height:27px;text-align:center;width:93px;letter-spacing:.65px}
.pct{font:700 11px "Open Sans",sans-serif;fill:#fff;letter-spacing:0}
.wt{font:700 14px "Open Sans",sans-serif;fill:#fff;letter-spacing:0}
.peek{width:1px;height:60px;background:#77757c}
```
